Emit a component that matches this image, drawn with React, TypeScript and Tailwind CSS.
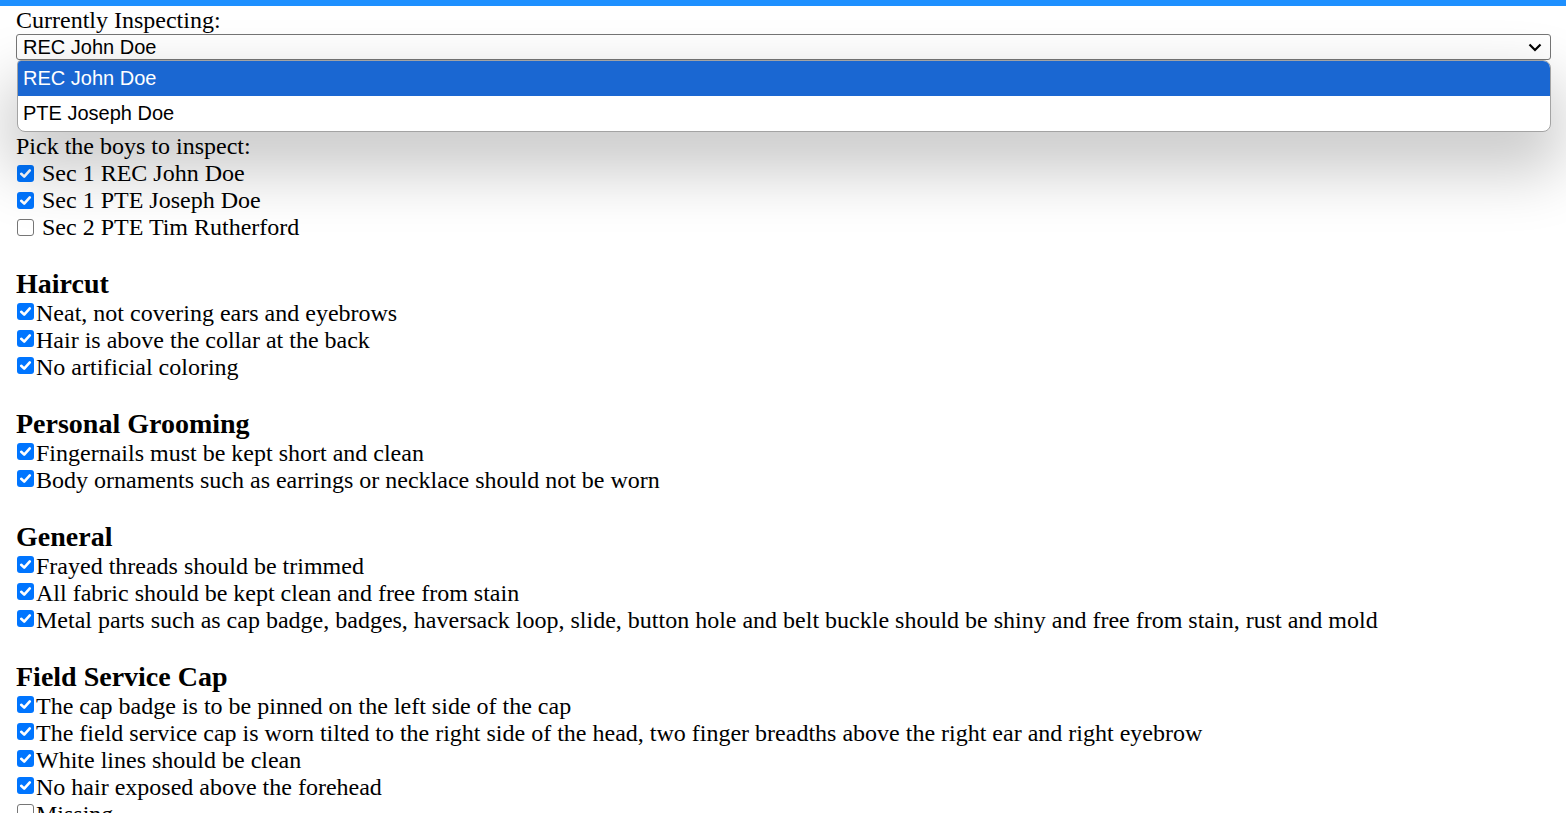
import React from "react";

const sections = [
  {
    title: "Haircut",
    items: [
      { text: "Neat, not covering ears and eyebrows", checked: true },
      { text: "Hair is above the collar at the back", checked: true },
      { text: "No artificial coloring", checked: true },
    ],
  },
  {
    title: "Personal Grooming",
    items: [
      { text: "Fingernails must be kept short and clean", checked: true },
      { text: "Body ornaments such as earrings or necklace should not be worn", checked: true },
    ],
  },
  {
    title: "General",
    items: [
      { text: "Frayed threads should be trimmed", checked: true },
      { text: "All fabric should be kept clean and free from stain", checked: true },
      {
        text: "Metal parts such as cap badge, badges, haversack loop, slide, button hole and belt buckle should be shiny and free from stain, rust and mold",
        checked: true,
      },
    ],
  },
  {
    title: "Field Service Cap",
    items: [
      { text: "The cap badge is to be pinned on the left side of the cap", checked: true },
      {
        text: "The field service cap is worn tilted to the right side of the head, two finger breadths above the right ear and right eyebrow",
        checked: true,
      },
      { text: "White lines should be clean", checked: true },
      { text: "No hair exposed above the forehead", checked: true },
      { text: "Missing", checked: false },
    ],
  },
];

const boys = [
  { text: "Sec 1 REC John Doe", checked: true },
  { text: "Sec 1 PTE Joseph Doe", checked: true },
  { text: "Sec 2 PTE Tim Rutherford", checked: false },
];

const Box = ({ checked }: { checked: boolean }) =>
  checked ? (
    <span className="flex h-[17px] w-[17px] shrink-0 items-center justify-center rounded-[3px] bg-[#0075ff]">
      <svg width="13" height="13" viewBox="0 0 13 13" fill="none">
        <path d="M2.2 6.8 L5.2 9.6 L10.8 3.4" stroke="#fff" strokeWidth="2.6" strokeLinecap="round" strokeLinejoin="round" />
      </svg>
    </span>
  ) : (
    <span className="block h-[17px] w-[17px] shrink-0 rounded-[3px] border-[1.5px] border-[#767676] bg-white" />
  );

const App = () => {
  return (
    <div className="h-screen bg-white">
      <div className="relative h-[813px] overflow-hidden text-[24px] leading-[27px] text-black [font-family:'Liberation_Serif',serif]">
        <div className="h-[6px] bg-[#1e90ff]" />
        <div className="pl-4 pr-[15px]">
          <div className="h-[28px] leading-[28px]">Currently Inspecting:</div>
          <div className="flex h-[26px] items-center justify-between rounded-[3px] border border-[#767676] pl-[6px] pr-[8px] text-[20px] leading-[24px] [font-family:'Liberation_Sans',sans-serif]">
            <span>REC John Doe</span>
            <svg width="14" height="9" viewBox="0 0 14 9" fill="none">
              <path d="M1.5 1.5 L7 7 L12.5 1.5" stroke="#000" strokeWidth="2.2" />
            </svg>
          </div>
          <div className="mt-[73px]">Pick the boys to inspect:</div>
          {boys.map((b) => (
            <div key={b.text} className="flex h-[27px] items-start">
              <span className="ml-px mt-[5px]">
                <Box checked={b.checked} />
              </span>
              <span className="ml-[8px]">{b.text}</span>
            </div>
          ))}
          {sections.map((s) => (
            <div key={s.title}>
              <h3 className="mt-[27px] h-[32px] text-[28px] font-bold leading-[32px]">{s.title}</h3>
              {s.items.map((it) => (
                <div key={it.text} className="flex h-[27px] items-start whitespace-nowrap">
                  <span className="ml-px mt-[3px]">
                    <Box checked={it.checked} />
                  </span>
                  <span className="ml-[2px]">{it.text}</span>
                </div>
              ))}
            </div>
          ))}
        </div>

        {/* open select list */}
        <div className="absolute left-[17px] right-[15px] top-[60px] overflow-hidden rounded-[8px] rounded-tl-[4px] border-[1.5px] border-[#a3a3a3] bg-white text-[20px] leading-[35px] shadow-[0_30px_60px_12px_rgba(0,0,0,0.2)] [font-family:'Liberation_Sans',sans-serif]">
          <div className="h-[35px] bg-[#1a67d2] pl-[5px] text-white">REC John Doe</div>
          <div className="h-[35px] pl-[5px] text-black">PTE Joseph Doe</div>
        </div>
      </div>
    </div>
  );
};

export default App;
